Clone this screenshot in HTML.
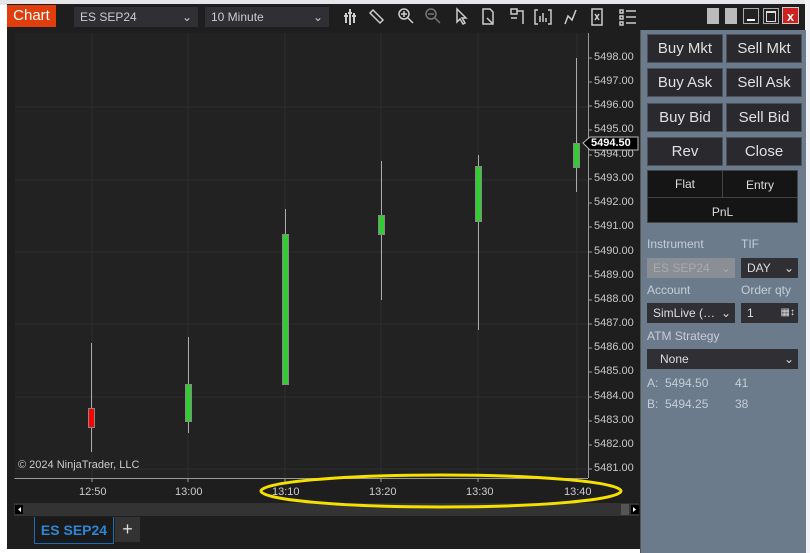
<!DOCTYPE html>
<html><head><meta charset="utf-8"><style>
body{margin:0;width:810px;height:553px;overflow:hidden;background:#fff;font-family:"Liberation Sans",sans-serif;position:relative}
.a{position:absolute}
.btn{position:absolute;background:#2a2a2e;border:1px solid #4a525c;color:#e0e0e0;font-size:15px;text-align:center;line-height:27px;height:27px;width:74px}
.lbl{position:absolute;color:#c5cdd6;font-size:12px}
.dd{position:absolute;background:#2f2f34;color:#ddd;font-size:12px;height:20px;line-height:20px;padding-left:6px;box-sizing:border-box}
.pl{position:absolute;left:594px;color:#c8c8c8;font-size:11px}
.tl{position:absolute;top:486px;color:#ccc;font-size:11px}
</style></head><body>
<div class="a" style="left:0;top:0;width:810px;height:5px;background:#e4e6ea"></div>
<div class="a" style="left:7px;top:4px;width:798px;height:545px;background:#1e1e1e"></div>
<div class="a" style="left:805px;top:0;width:5px;height:553px;background:#f0f2f5"></div>
<div class="a" style="left:7px;top:5px;width:49px;height:22px;background:#e03e0c;color:#fff;font-size:15px;line-height:22px;text-align:center">Chart</div>
<div class="dd" style="left:74px;top:7px;width:124px;color:#ccc">ES SEP24<span style="position:absolute;right:6px">⌄</span></div>
<div class="dd" style="left:205px;top:7px;width:124px;color:#ccc">10 Minute<span style="position:absolute;right:6px">⌄</span></div>
<svg class="a" style="left:340px;top:5px" width="300" height="24" fill="none" stroke="#ccc" stroke-width="1.5">
<path d="M6 8v10M10 4v16M14 8v10M4 11h4M8 8h4M12 11h4" stroke-width="2"/>
<path d="M33 5l10 10-3 3-10-10z"/>
<circle cx="64" cy="9" r="5"/><path d="M68 13l5 5M61 9h6M64 6v6"/>
<circle cx="91" cy="9" r="5" stroke="#777"/><path d="M95 13l5 5M88 9h6" stroke="#777"/>
<path d="M117 4v13l3-3 3 5 2-1-3-5h4z"/>
<path d="M143 4h7l3 3v12h-10zM147 13l5 5"/>
<path d="M171 4h6v5h-6zM177 6h6v13M171 13h6"/>
<path d="M198 5h-3v14h3M208 5h3v14h-3M200 17v-6M203 17v-9M206 17v-4"/>
<path d="M225 19l3-8 4 4 4-10" />
<path d="M252 4h10v16h-10zM255 9l4 6M259 9l-4 6"/>
<path d="M280 5h3v3h-3zM280 11h3v3h-3zM280 17h3v3h-3zM286 6h10M286 12h10M286 18h10"/>
</svg>
<div class="a" style="left:707px;top:8px;width:12px;height:16px;background:#bbb"></div>
<div class="a" style="left:725px;top:8px;width:12px;height:16px;background:#bbb"></div>
<div class="a" style="left:743px;top:8px;width:16px;height:16px;border:1px solid #aaa;box-sizing:border-box;background:#222"><div style="margin:10px 3px 0;height:2px;background:#fff"></div></div>
<div class="a" style="left:763px;top:8px;width:16px;height:16px;border:1px solid #aaa;box-sizing:border-box;background:#222"><div style="margin:2px;height:8px;border:1px solid #ddd;border-top-width:2px"></div></div>
<div class="a" style="left:782px;top:7px;width:17px;height:17px;background:#d02020;color:#fff;font-size:13px;font-weight:bold;line-height:17px;text-align:center;border:1px solid #ccc;box-sizing:border-box">x</div>

<svg class="a" style="left:0;top:0" width="641" height="553">
<rect x="15" y="33" width="573" height="445" fill="#222"/>
<g stroke="#2e2e2e" stroke-width="1">
<path d="M15 107H588M15 180H588M15 252H588M15 324H588M15 397H588M15 469H588"/>
<path d="M92 33V478M188 33V478M285 33V478M381 33V478M478 33V478M577 33V478"/>
</g>
<path d="M588.5 33V478M14.5 478.5H588" stroke="#999"/>
<g stroke="#999">
<path d="M588 58h4M588 82h4M588 106h4M588 130h4M588 155h4M588 179h4M588 203h4M588 227h4M588 252h4M588 276h4M588 300h4M588 324h4M588 348h4M588 372h4M588 397h4M588 421h4M588 445h4M588 469h4"/>
<path d="M92 478v4M188 478v4M285 478v4M381 478v4M478 478v4M577 478v4"/>
</g>
<g stroke="#aaa"><path d="M91.5 343V452M188.5 337V433M285.5 209V384M381.5 161V300M478.5 155V330M576.5 58V192"/></g>
<rect x="88.5" y="408.5" width="6" height="19" fill="#f00" stroke="#888"/>
<rect x="185.5" y="384.5" width="6" height="37" fill="#32cd32" stroke="#888"/>
<rect x="282.5" y="234.5" width="6" height="150" fill="#32cd32" stroke="#888"/>
<rect x="378.5" y="215.5" width="6" height="19" fill="#32cd32" stroke="#888"/>
<rect x="475.5" y="166.5" width="6" height="55" fill="#32cd32" stroke="#888"/>
<rect x="573.5" y="143.5" width="6" height="24" fill="#32cd32" stroke="#888"/>
<path d="M583 143l7-6h48v13h-48z" fill="#000" stroke="#bbb"/>
<rect x="14" y="503" width="625" height="13" fill="#333"/>
<rect x="15" y="505" width="8" height="9" fill="#000"/><path d="M21 507v5l-3-2.5z" fill="#fff"/>
<rect x="631" y="505" width="8" height="9" fill="#000"/><path d="M633 507v5l3-2.5z" fill="#fff"/>
<rect x="621" y="504" width="8" height="11" fill="#555"/>
<ellipse cx="441" cy="491" rx="180" ry="16" fill="none" stroke="#f5e000" stroke-width="3"/>
</svg>
<div class="a" style="left:591px;top:137px;color:#fff;font-size:11px;font-weight:bold">5494.50</div>
<div class="pl" style="top:51px">5498.00</div><div class="pl" style="top:75px">5497.00</div><div class="pl" style="top:99px">5496.00</div><div class="pl" style="top:123px">5495.00</div><div class="pl" style="top:148px">5494.00</div><div class="pl" style="top:172px">5493.00</div><div class="pl" style="top:196px">5492.00</div><div class="pl" style="top:220px">5491.00</div><div class="pl" style="top:245px">5490.00</div><div class="pl" style="top:269px">5489.00</div><div class="pl" style="top:293px">5488.00</div><div class="pl" style="top:317px">5487.00</div><div class="pl" style="top:341px">5486.00</div><div class="pl" style="top:365px">5485.00</div><div class="pl" style="top:390px">5484.00</div><div class="pl" style="top:414px">5483.00</div><div class="pl" style="top:438px">5482.00</div><div class="pl" style="top:462px">5481.00</div>
<div class="tl" style="left:79px">12:50</div><div class="tl" style="left:175px">13:00</div><div class="tl" style="left:272px">13:10</div><div class="tl" style="left:369px">13:20</div><div class="tl" style="left:466px">13:30</div><div class="tl" style="left:564px">13:40</div>
<div class="a" style="left:18px;top:459px;color:#ccc;font-size:11px">© 2024 NinjaTrader, LLC</div>
<div class="a" style="left:34px;top:517px;width:80px;height:27px;background:#1a1a1a;border:1px solid #1b6fb5;border-top:none;box-sizing:border-box;color:#2e86d6;font-size:14px;font-weight:bold;line-height:26px;text-align:center">ES SEP24</div>
<div class="a" style="left:115px;top:517px;width:25px;height:25px;background:#333;color:#ddd;font-size:18px;line-height:24px;text-align:center">+</div>

<div class="a" style="left:640px;top:30px;width:165px;height:523px;background:#6b7b8c;border-left:1px solid #555"></div>
<div class="btn" style="left:647px;top:34px">Buy Mkt</div><div class="btn" style="left:726px;top:34px">Sell Mkt</div>
<div class="btn" style="left:647px;top:68px">Buy Ask</div><div class="btn" style="left:726px;top:68px">Sell Ask</div>
<div class="btn" style="left:647px;top:103px">Buy Bid</div><div class="btn" style="left:726px;top:103px">Sell Bid</div>
<div class="btn" style="left:647px;top:137px">Rev</div><div class="btn" style="left:726px;top:137px">Close</div>
<div class="a" style="left:647px;top:170px;width:151px;height:53px;background:#151515;border:1px solid #444;box-sizing:border-box"></div>
<div class="a" style="left:722px;top:171px;width:1px;height:26px;background:#444"></div>
<div class="a" style="left:648px;top:197px;width:149px;height:1px;background:#444"></div>
<div class="a" style="left:648px;top:177px;width:74px;text-align:center;color:#ddd;font-size:12px">Flat</div>
<div class="a" style="left:723px;top:178px;width:74px;text-align:center;color:#ddd;font-size:12px">Entry</div>
<div class="a" style="left:648px;top:205px;width:149px;text-align:center;color:#ddd;font-size:12px">PnL</div>
<div class="lbl" style="left:647px;top:237px">Instrument</div><div class="lbl" style="left:741px;top:237px">TIF</div>
<div class="dd" style="left:647px;top:258px;width:88px;background:#8a8f95;color:#aaa">ES SEP24<span style="position:absolute;right:4px">⌄</span></div>
<div class="dd" style="left:741px;top:258px;width:57px">DAY<span style="position:absolute;right:4px">⌄</span></div>
<div class="lbl" style="left:647px;top:283px">Account</div><div class="lbl" style="left:741px;top:283px">Order qty</div>
<div class="dd" style="left:647px;top:303px;width:88px">SimLive (…<span style="position:absolute;right:4px">⌄</span></div>
<div class="dd" style="left:741px;top:303px;width:57px">1<span style="position:absolute;right:3px;font-size:10px">▦↕</span></div>
<div class="lbl" style="left:647px;top:329px">ATM Strategy</div>
<div class="dd" style="left:647px;top:349px;width:151px;padding-left:13px">None<span style="position:absolute;right:4px">⌄</span></div>
<div class="lbl" style="left:647px;top:376px">A:&nbsp; 5494.50</div><div class="lbl" style="left:735px;top:376px">41</div>
<div class="lbl" style="left:647px;top:397px">B:&nbsp; 5494.25</div><div class="lbl" style="left:735px;top:397px">38</div>
</body></html>
